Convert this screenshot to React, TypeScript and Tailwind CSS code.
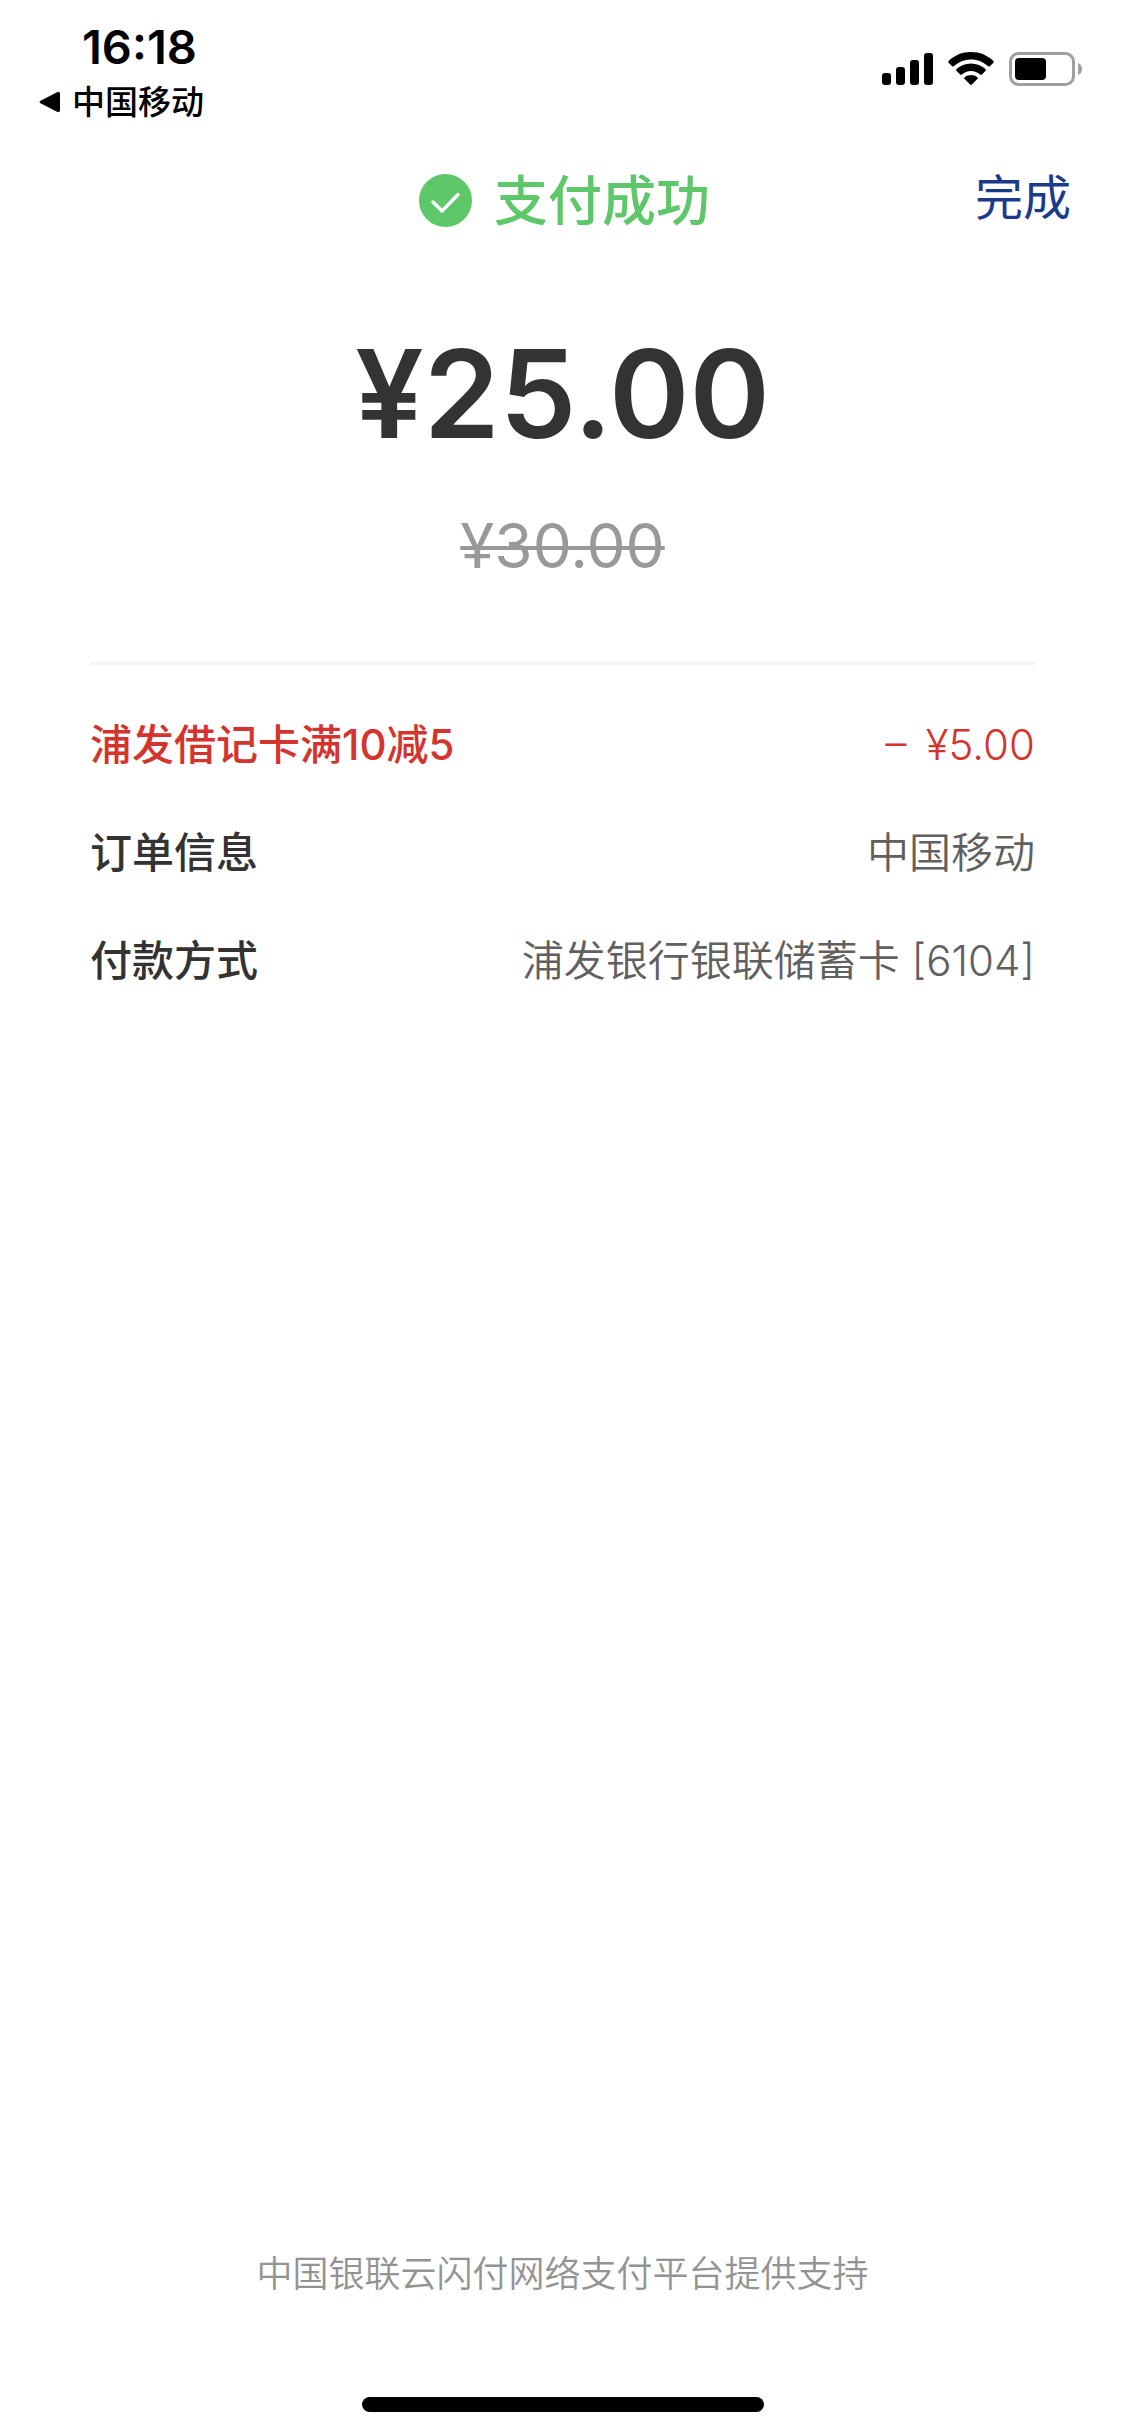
import React from 'react';

const DETAILS = [
  { label: '浦发借记卡满10减5', value: '–\u2009 ¥5.00', labelColor: 'text-[#d4342e]', valueColor: 'text-[#d4342e]' },
  { label: '订单信息', value: '中国移动', labelColor: 'text-[#333333]', valueColor: 'text-[#606060]' },
  { label: '付款方式', value: '浦发银行银联储蓄卡 [6104]', labelColor: 'text-[#333333]', valueColor: 'text-[#606060]' },
];

const StatusBar: React.FC = () => {
  return (
    <div className="flex justify-between items-start pt-5 pl-[39px] pr-[43px] h-[132px] text-black">
      <div>
        <div className="pl-[43px] text-[47px] leading-[54px] font-semibold">16:18</div>
        <button className="flex items-center gap-3 text-[33px] leading-[56px] font-medium">
          <svg className="w-[21px] h-[22px]" viewBox="0 0 21 22">
            <path d="M2 9.4 18 1.2Q21 0 21 3V19Q21 22 18 20.8L2 12.6Q-1 11 2 9.4Z" />
          </svg>
          中国移动
        </button>
      </div>

      <div className="flex items-center gap-[15px] pt-8">
        <svg className="w-[51px] h-[34px]" viewBox="0 0 51 34">
          <rect x="0" y="21" width="9" height="12" rx="3" />
          <rect x="14" y="15" width="9" height="18" rx="3" />
          <rect x="28" y="8" width="9" height="25" rx="3" />
          <rect x="42" y="1" width="9" height="32" rx="3" />
        </svg>
        <svg className="w-[46px] h-[34px]" viewBox="0 0 46 34">
          <path d="M23 0C32 0 39.600 3.400 45.200 8.800Q46.200 9.900 45.200 10.900L41.800 14.200Q40.900 15 39.900 14.100C35.500 9.900 29.600 7.400 23 7.400S10.500 9.900 6.100 14.100Q5.100 15 4.200 14.200L.8 10.900Q-.2 9.900.8 8.800C6.400 3.400 14 0 23 0Z" />
          <path d="M23 11.400C28.700 11.400 33.700 13.500 37.400 17Q38.400 18 37.400 19L33.900 22.400Q33 23.200 32 22.400C29.600 20.300 26.500 19 23 19S16.400 20.300 14 22.400Q13 23.200 12.100 22.400L8.600 19Q7.600 18 8.600 17C12.300 13.500 17.300 11.400 23 11.400Z" />
          <path d="M23 23C25.300 23 27.600 23.800 29.300 25.200Q30.200 26.100 29.400 27L23.900 32.500Q23 33.300 22.100 32.500L16.600 27Q15.800 26.100 16.700 25.200C18.400 23.800 20.700 23 23 23Z" />
        </svg>
        <svg className="w-[73px] h-[34px]" viewBox="0 0 73 34">
          <rect x="1.500" y="1.500" width="63" height="31" rx="8" fill="none" stroke="#a0a0a0" strokeWidth="3" />
          <rect x="6" y="6" width="31" height="22" rx="4" />
          <path d="M69 11Q73 12.500 73 17T69 23Z" fill="#a0a0a0" />
        </svg>
      </div>
    </div>
  );
};

const App: React.FC = () => {
  return (
    <div className="min-h-screen flex flex-col bg-white font-['Inter','Noto_Sans_CJK_SC',sans-serif]">
      <StatusBar />

      <header className="grid grid-cols-[1fr_auto_1fr] items-center h-[132px] px-[54px]">
        <h1 className="col-start-2 flex items-center gap-[22px] pt-1 pl-1 text-[54px] leading-[72px] font-medium text-[#5ec769]">
          <svg className="w-[53px] h-[53px]" viewBox="0 0 53 53" fill="none">
            <circle cx="26.500" cy="26.500" r="26.500" fill="#5ec769" />
            <path d="M14 28 23 37 39 20.500" stroke="white" strokeWidth="3.500" strokeLinecap="round" strokeLinejoin="round" />
          </svg>
          <span className="pt-1">支付成功</span>
        </h1>
        <button className="justify-self-end text-[48px] leading-[72px] text-[#1a3a8a]">完成</button>
      </header>

      <main className="px-[90px] pt-[58px]">
        <p className="text-center text-[122px] leading-[144px] font-semibold text-[#333333]">¥25.00</p>
        <p className="mt-11 text-center text-[62px] leading-[72px] text-[#999999]">
          <del className="decoration-4">¥30.00</del>
        </p>

        <dl className="mt-20 pt-[25px] border-t-3 border-[#f4f4f4] text-[42px]">
          {DETAILS.map(item => (
            <div key={item.label} className="flex justify-between items-center h-[108px]">
              <dt className={`font-medium ${item.labelColor}`}>{item.label}</dt>
              <dd className={`font-[350] ${item.valueColor}`}>{item.value}</dd>
            </div>
          ))}
        </dl>
      </main>

      <footer className="mt-auto flex flex-col items-center pb-6">
        <p className="text-[36px] leading-[54px] font-[350] text-[#939393]">中国银联云闪付网络支付平台提供支持</p>
        <div className="mt-24 w-[402px] h-[15px] rounded-full bg-black"></div>
      </footer>
    </div>
  );
};

export default App;
